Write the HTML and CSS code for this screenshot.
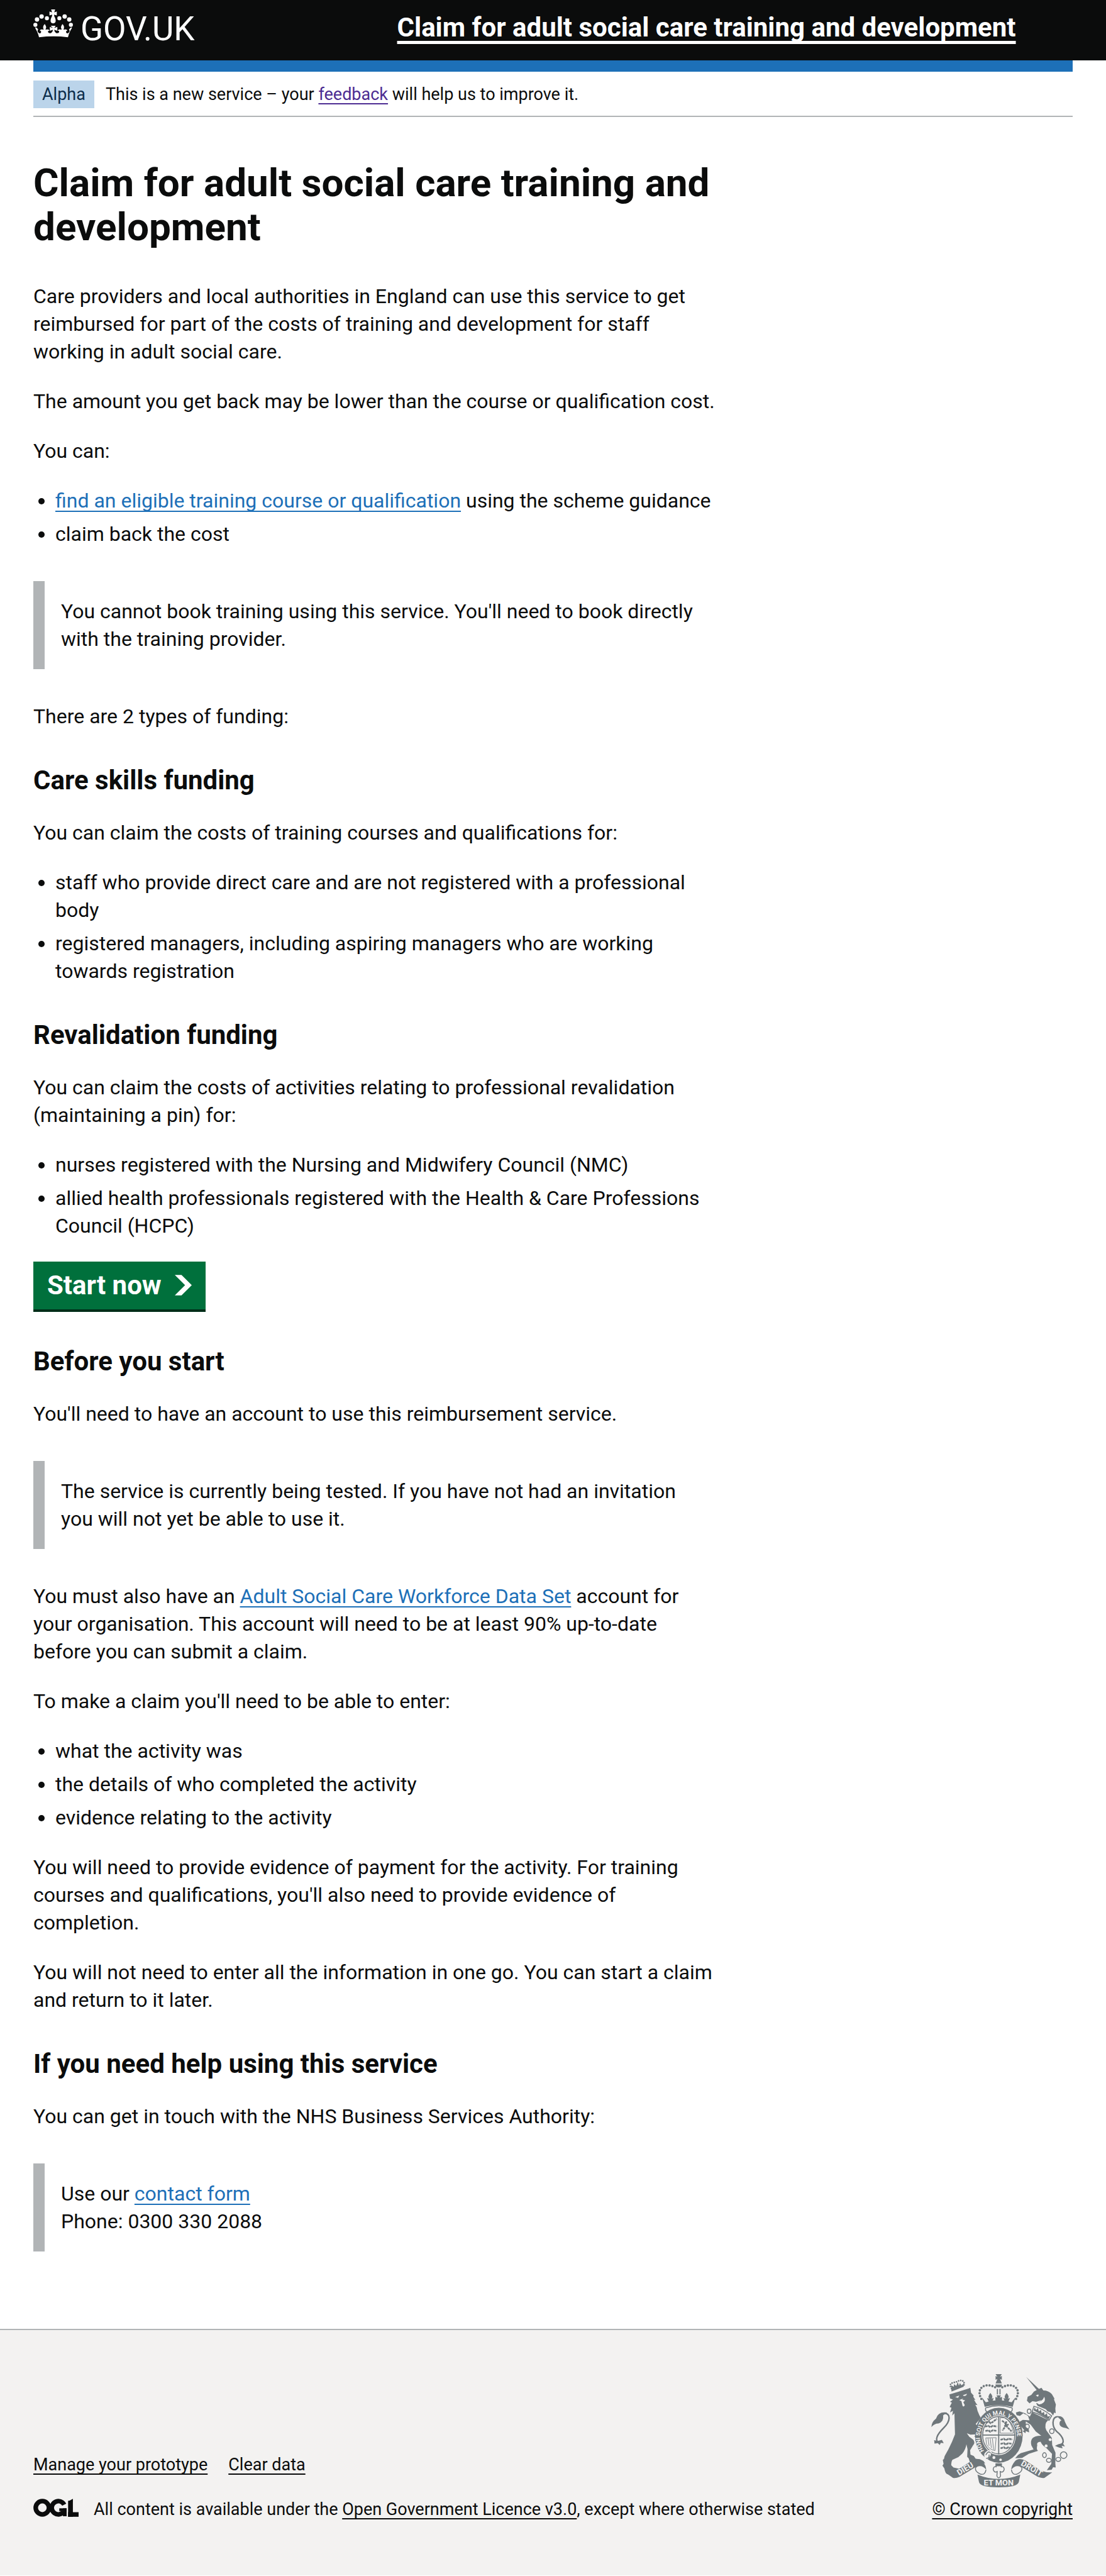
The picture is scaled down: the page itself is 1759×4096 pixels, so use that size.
FILE: index.html
```html
<!DOCTYPE html>
<html lang="en">
<head>
<meta charset="utf-8">
<meta name="viewport" content="width=device-width, initial-scale=1">
<title>Claim for adult social care training and development</title>
<link rel="stylesheet" href="styles.css">
</head>
<body>
<header class="header">
  <div class="container header-row">
    <a class="logo" href="#">
      <svg class="logo-crown" viewBox="12 16 216 158" aria-hidden="true">
        <g fill="currentColor">
          <circle cx="32" cy="71" r="12"/><circle cx="57" cy="55" r="12"/><circle cx="86" cy="64" r="11"/><circle cx="23" cy="100" r="11"/>
          <circle cx="154" cy="64" r="11"/><circle cx="183" cy="55" r="12"/><circle cx="208" cy="71" r="12"/><circle cx="217" cy="100" r="11"/>
          <path d="M109 16h22l-5 16 14-5v22l-15-5q0 8 5 17 4 10 4 17a14 14 0 0 1-28 0q0-7 4-17 5-9 5-17l-15 5V27l14 5z"/>
          <path d="M106 105h28l-8 12 17-6v22l-17-6q0 10 9 17 10 5 17-3 4-8-7-9 3-9 13-7 6 2 9 0-9-14 4-29 15 14 5 29 4 2 9 0 10-2 13 7-9 1-7 9 3 8 11 5 8-4 8-12l-3-11q4 0 7-6l8-4q2 6-5 14-5 8-11 24l-5 17q-78-10-158 0l-5-17q-6-16-11-24-6-8-4-14l9 4q3 6 6 6l-3 11q0 8 8 12 8 3 11-5 2-8-7-9 3-9 13-7 5 2 9 0-10-15 5-29 13 15 4 29 3 2 9 0 10-2 13 7-11 1-7 9 7 8 17 3 9-7 9-17l-17 6v-22l17 6z"/>
        </g>
      </svg>
      <span class="logo-text">GOV.UK</span>
    </a>
    <a class="service-name" href="#">Claim for adult social care training and development</a>
  </div>
</header>

<div class="container">
  <div class="phase-banner">
    <strong class="tag">Alpha</strong>
    <span>This is a new service – your <a class="visited" href="#">feedback</a> will help us to improve it.</span>
  </div>

  <main class="main">
    <h1>Claim for adult social care training and development</h1>
    <p>Care providers and local authorities in England can use this service to get reimbursed for part of the costs of training and development for staff working in adult social care.</p>
    <p>The amount you get back may be lower than the course or qualification cost.</p>
    <p>You can:</p>
    <ul>
      <li><a href="#">find an eligible training course or qualification</a> using the scheme guidance</li>
      <li>claim back the cost</li>
    </ul>
    <div class="inset">You cannot book training using this service. You'll need to book directly with the training provider.</div>
    <p>There are 2 types of funding:</p>

    <h2>Care skills funding</h2>
    <p>You can claim the costs of training courses and qualifications for:</p>
    <ul>
      <li>staff who provide direct care and are not registered with a professional body</li>
      <li>registered managers, including aspiring managers who are working towards registration</li>
    </ul>

    <h2>Revalidation funding</h2>
    <p>You can claim the costs of activities relating to professional revalidation (maintaining a pin) for:</p>
    <ul>
      <li>nurses registered with the Nursing and Midwifery Council (NMC)</li>
      <li>allied health professionals registered with the Health &amp; Care Professions Council (HCPC)</li>
    </ul>

    <button class="start-button" type="button">
      Start now
      <svg class="start-arrow" viewBox="0 0 33 40" aria-hidden="true"><path fill="currentColor" d="M0 0h13l20 20-20 20H0l20-20z"/></svg>
    </button>

    <h2 class="after-button">Before you start</h2>
    <p>You'll need to have an account to use this reimbursement service.</p>
    <div class="inset">The service is currently being tested. If you have not had an invitation you will not yet be able to use it.</div>
    <p>You must also have an <a href="#">Adult Social Care Workforce Data Set</a> account for your organisation. This account will need to be at least 90% up-to-date before you can submit a claim.</p>
    <p>To make a claim you'll need to be able to enter:</p>
    <ul>
      <li>what the activity was</li>
      <li>the details of who completed the activity</li>
      <li>evidence relating to the activity</li>
    </ul>
    <p>You will need to provide evidence of payment for the activity. For training courses and qualifications, you'll also need to provide evidence of completion.</p>
    <p>You will not need to enter all the information in one go. You can start a claim and return to it later.</p>

    <h2>If you need help using this service</h2>
    <p>You can get in touch with the NHS Business Services Authority:</p>
    <div class="inset">Use our <a href="#">contact form</a><br>Phone: 0300 330 2088</div>
  </main>
</div>

<footer class="footer">
  <div class="container footer-row">
    <div class="footer-meta">
      <nav class="footer-links">
        <a href="#">Manage your prototype</a>
        <a href="#">Clear data</a>
      </nav>
      <div class="licence">
        <svg class="ogl" viewBox="60 113 246 98" role="img" aria-label="OGL">
          <g fill="none" stroke="currentColor" stroke-width="25">
            <circle cx="109" cy="162" r="36"/>
            <circle cx="196" cy="162" r="36" stroke-dasharray="185 42" transform="rotate(36 196 162)"/>
          </g>
          <g fill="currentColor">
            <rect x="201" y="165" width="40" height="15"/>
            <rect x="221" y="165" width="20" height="43"/>
            <rect x="249" y="124" width="26" height="87"/>
            <rect x="249" y="186" width="57" height="25"/>
            <path d="M249 128l26-15v15z"/>
          </g>
        </svg>
        <span>All content is available under the <a href="#">Open Government Licence v3.0</a>, except where otherwise stated</span>
      </div>
    </div>
    <div class="copyright">
      <svg class="crest" viewBox="252 128 750 613" aria-hidden="true">
        <g class="crest-ink">
          <!-- royal crown -->
          <path d="M601 128h34l-10 14 10-4v20l-10-4 10 24h-34l10-24-10 4v-20l10 4zM600 184h36q0 16-18 16t-18-16zM608 208h6v30h-6zM622 208h6v30h-6z"/>
          <path d="M528 255l20 25q70-22 140 0l20-25-14 50q-76-18-152 0zM606 243h24l-6 12 12-4v22h-36v-22l12 4zM573 230q18 20 6 30l12-2-8 18h-20l-8-18 12 2q-12-10 6-30zM661 230q18 20 6 30l12-2-8 18h-20l-8-18 12 2q-12-10 6-30z"/>
          <path class="beads" d="M524 262C490 200 550 168 604 202M712 262C746 200 686 168 632 202"/>
          <path class="line5" d="M548 308q-6 18 8 24M690 308q6 18-8 24M550 310q68-22 138 0"/>
          <!-- lion -->
          <g transform="translate(240 114)">
            <path d="M111 124L214 92l10-4 4 26 14 16-2 6 12 18-8-2 10 18 9 12-12-2 8 14 4 18 10 24 8 14-12 16-16 18 14 14 16 32 22 34-2 20-14 6-14-4-12 6-2-14-10-4 2-14-6-8 8-12-30 2-20-8 14 20 20 14q14 16 0 32l-16 26 2 24 18 8 10 14 24 4 18 8 10 14-14-2-6 10-22-2-14 2-16-14-12-4-6-18-8-8 2-42-6-26q-4 28-22 50l-22 20-32 14q-8 12-6 30l12 12 20 4 22 6 8 16-12-4-6 12-14-4-12 6-14-4-14 8-16-6-8-14-4-16-10-14 6-10-4-22 6-4 4-16 20-36 20-42 16-40L138 226 126 238 130 212 114 222 122 196 112 192 124 168 114 164 130 152 114 146z"/>
            <path class="line7" d="M62 390C20 375 50 335 80 305C118 268 118 226 84 226"/>
            <path d="M98 222Q50 215 38 255q-24 18-25 46 16-20 38-20 30-8 26-44zM28 372l20 4 22-6 10 18-18-2-4 12-10-10-18 2z"/>
            <path class="small-beads" d="M122 92Q105 66 132 60l16-4Q185 36 192 66l-4 12"/>
            <path d="M122 108l66-26 2-18-14 10-8-12-6 14-6-20-8 22-12-10-2 14-14-8z"/>
            <path class="paper" d="M118 114l82-28 4 4-84 29zM142 138l22-8-6 12zM184 128l22-8q-4 14-18 12zM164 154l22-8-6 6 16 4-10 10 8 16q-4 12-12 4l-4-16-2-10z"/>
          </g>
          <!-- unicorn -->
          <g transform="translate(615 114)">
            <path d="M152 29l81 76-12 10zM235 88l10 14q28 0 46 20l14 24-2 6 10 26-3 22 2 26-8-4-6 16-14-18-16-4-10-12-44-18-8-14q14-4 30-18l-30 10-20-4-16 12-14-14 4-22 20-10 14-18 18-10z"/>
            <path class="paper" d="M204 130q12-8 16-4l-4 10zM206 168q34-4 44-32 14 34-28 42z"/>
            <path class="line5" d="M194 188q48 12 96 52l-14 24q-44-32-92-46z"/>
            <path d="M192 210l6-16 8 14 10-10 4 18 12-8 4 18 12-8 4 18 12-10 4 18 14-4-8 18z"/>
            <path d="M183 220L271 263Q247 284 261 318L291 360 293 398 311 440 310 498 312 520 298 518 290 532 264 534 288 500 292 446 262 415Q240 402 230 380 206 382 212 400 206 422 216 430L166 446 130 468 92 470 108 452 122 442 192 422 180 400Q168 346 234 348L204 325 176 287 150 270 150 300 166 312 168 330 150 322 148 334 132 322 142 318 118 290 106 282 116 272 134 262 170 264 162 240 136 226 118 240 100 236 96 222 116 216 146 226 172 244z"/>
            <path class="line7" d="M328 400C372 392 350 350 318 325C290 298 290 246 322 244"/>
            <path d="M318 242q36-6 44 30 8 22 25 42l-20-8q-30-4-34-20-2-18 10-22zM308 402l18-8 24-6 12 18-18-4 6 14-20-4z"/>
            <g class="line5">
              <ellipse cx="168" cy="215" rx="10" ry="12"/><ellipse cx="157" cy="298" rx="12" ry="13"/><ellipse cx="291" cy="323" rx="12" ry="13"/>
              <ellipse cx="251" cy="453" rx="10" ry="13"/><ellipse cx="275" cy="481" rx="13" ry="11"/><ellipse cx="326" cy="476" rx="13" ry="11"/><circle cx="355" cy="453" r="18"/>
            </g>
            <g class="paper"><circle cx="150" cy="240" r="7"/><circle cx="282" cy="369" r="8"/><circle cx="260" cy="403" r="8"/></g>
          </g>
          <!-- garter and shield -->
          <ellipse cx="619" cy="459" rx="129" ry="149"/>
          <ellipse cx="618" cy="459" rx="93" ry="108" class="paper"/>
          <ellipse cx="618" cy="459" rx="87" ry="101" class="line5"/>
          <path d="M615 356h6v206h-6zM530 455h178v6H530z"/>
          <path class="line3" d="M626 364h26q36 20 46 84h-72zM548 474l56-2-6 70q-30-4-46-34zM560 476l6 40M572 476l6 52M584 476l6 60"/>
          <path class="charge" d="M548 390l18-4 8 8 10-6 24-18M544 412l18-4 10 8 14-8 22 4M546 436l16-4 10 8 14-8 22 4M628 484l18-6 10 8 14-8 22 4M628 506l18-4 10 8 14-8 20 4M628 530l18-6 10 8 14-8 8 4M636 380l18 14 10 20 24 24M660 384l-8 30-14 20M672 400l-24 10"/>
          <path class="paper" d="M540 560q20-30 40-14l-6 22-14 20q-24 6-20-28z"/>
          <path class="line5" d="M548 566q14-26 26-10M550 584q18 2 16-20"/>
          <circle class="paper" cx="592" cy="580" r="8"/><circle class="paper" cx="628" cy="592" r="7"/>
          <path id="garter" fill="none" d="M540 545A101 120 0 1 1 690 552"/>
          <text class="crest-text garter-text"><textPath href="#garter" startOffset="2">HONI SOIT QUI MAL Y PENSE</textPath></text>
          <!-- motto ribbon -->
          <path d="M328 660q34 2 62-10l80-52q40-22 62 4 18 22 18 44-22-30-58-14l-72 44q-26 18-50 14zM908 660q-34 2-62-10l-80-52q-40-22-62 4-18 22-18 44 22-30 58-14l72 44q26 18 50 14zM503 672q115 48 232 0l-8 40q-8 29-109 29t-107-29z"/>
          <path class="line5" d="M549 646q-4 30-30 24-34-16-26-36l12-10M687 646q4 30 30 24 34-16 26-36l-12-10"/>
          <path class="line5" d="M604 614h28v16q14-4 16 14-4 20-22 12l2 24q-10 20-20 0l2-24q-18 8-22-12 2-18 16-14z"/>
          <path d="M601 611h34v16h-34z"/>
          <text class="crest-text" transform="translate(444 654) rotate(-31)">DIEU</text>
          <text class="crest-text" transform="translate(790 652) rotate(30)">DROIT</text>
          <text class="crest-text" x="618" y="731">ET MON</text>
        </g>
      </svg>
      <a href="#">© Crown copyright</a>
    </div>
  </div>
</footer>
</body>
</html>
```

FILE: styles.css
```css
*,
*::before,
*::after {
  box-sizing: border-box;
}

body {
  margin: 0;
  background: #fff;
  color: #0b0c0c;
  font-family: Roboto, "Liberation Sans", sans-serif;
  font-size: 32px;
  line-height: 44px;
}

a {
  color: #1d70b8;
  text-decoration: underline;
  text-decoration-thickness: 2px;
  text-decoration-skip-ink: none;
  text-underline-offset: 5px;
}

.visited {
  color: #4c2c92;
}

.container {
  margin: 0 53px;
}

.header {
  background: #0b0c0c;
}

.header-row {
  display: flex;
  align-items: flex-start;
  height: 96px;
}

.header a {
  color: #fff;
}

.logo {
  display: flex;
  flex: 0 0 35%;
  align-items: flex-start;
  gap: 12px;
  padding-top: 15px;
  text-decoration: none;
}

.logo-crown {
  width: 63px;
  height: 46px;
}

.logo-text {
  font-size: 53px;
  line-height: 62px;
}

.service-name {
  padding-top: 17px;
  font-size: 42px;
  font-weight: 700;
  line-height: 53px;
  text-decoration-thickness: 5px;
  text-underline-offset: 7px;
}

.phase-banner {
  display: flex;
  align-items: center;
  gap: 18px;
  padding: 14px 0 12px;
  border-top: 18px solid #1d70b8;
  border-bottom: 2px solid #b1b4b6;
  font-size: 27px;
  line-height: 44px;
}

.tag {
  padding: 0 14px;
  background: #bbd4ea;
  color: #0c2d4a;
  font-weight: 400;
}

.main {
  max-width: 1088px;
  padding: 70px 0;
}

h1 {
  margin: 0 0 53px;
  font-size: 62px;
  line-height: 70px;
}

h2 {
  margin: 0 0 35px;
  padding-top: 18px;
  font-size: 42px;
  line-height: 53px;
}

.after-button {
  padding-top: 0;
}

p {
  margin: 0 0 35px;
}

ul {
  margin: 0 0 35px;
  padding-left: 35px;
}

li {
  margin-bottom: 9px;
}

li:last-child {
  margin-bottom: 0;
}

.inset {
  margin: 53px 0;
  padding: 26px;
  border-left: 18px solid #b1b4b6;
}

.start-button {
  display: flex;
  align-items: center;
  gap: 21px;
  margin: 0 0 56px;
  padding: 11px 22px 12px;
  border: 0;
  background: #00703c;
  box-shadow: 0 4px 0 #002d18;
  color: #fff;
  font: 700 42px/53px Roboto, "Liberation Sans", sans-serif;
}

.start-arrow {
  width: 27px;
  height: 33px;
}

.footer {
  padding: 70px 0 87px;
  border-top: 2px solid #b1b4b6;
  background: #f3f2f1;
  font-size: 27px;
  line-height: 35px;
}

.footer a {
  color: #0b0c0c;
}

.footer-row {
  display: flex;
  align-items: flex-end;
  justify-content: space-between;
}

.footer-meta {
  display: flex;
  flex-direction: column;
  gap: 36px;
}

.footer-links {
  display: flex;
  gap: 33px;
}

.licence {
  display: flex;
  align-items: flex-start;
  gap: 24px;
}

.ogl {
  width: 72px;
  height: 29px;
}

.copyright {
  display: flex;
  flex-direction: column;
  align-items: flex-end;
  gap: 18px;
}

.crest {
  width: 220px;
  height: 180px;
  margin-right: 5px;
}

.crest-ink {
  fill: #6f777b;
}

.paper {
  fill: #f3f2f1;
}

.line3,
.line5,
.line7,
.charge {
  fill: none;
  stroke: #6f777b;
  stroke-width: 5;
}

.line3 {
  stroke-width: 3;
}

.line7 {
  stroke-width: 8;
}

.charge {
  stroke-width: 9;
  stroke-dasharray: 14 3;
}

.beads,
.small-beads {
  fill: none;
  stroke: #6f777b;
  stroke-width: 13;
  stroke-linecap: round;
  stroke-dasharray: 0 16;
}

.small-beads {
  stroke-width: 9;
  stroke-dasharray: 0 12;
}

.crest-text {
  fill: #f3f2f1;
  font-size: 44px;
  font-weight: 700;
  text-anchor: middle;
}

.garter-text {
  font-size: 32px;
  text-anchor: start;
}
```
